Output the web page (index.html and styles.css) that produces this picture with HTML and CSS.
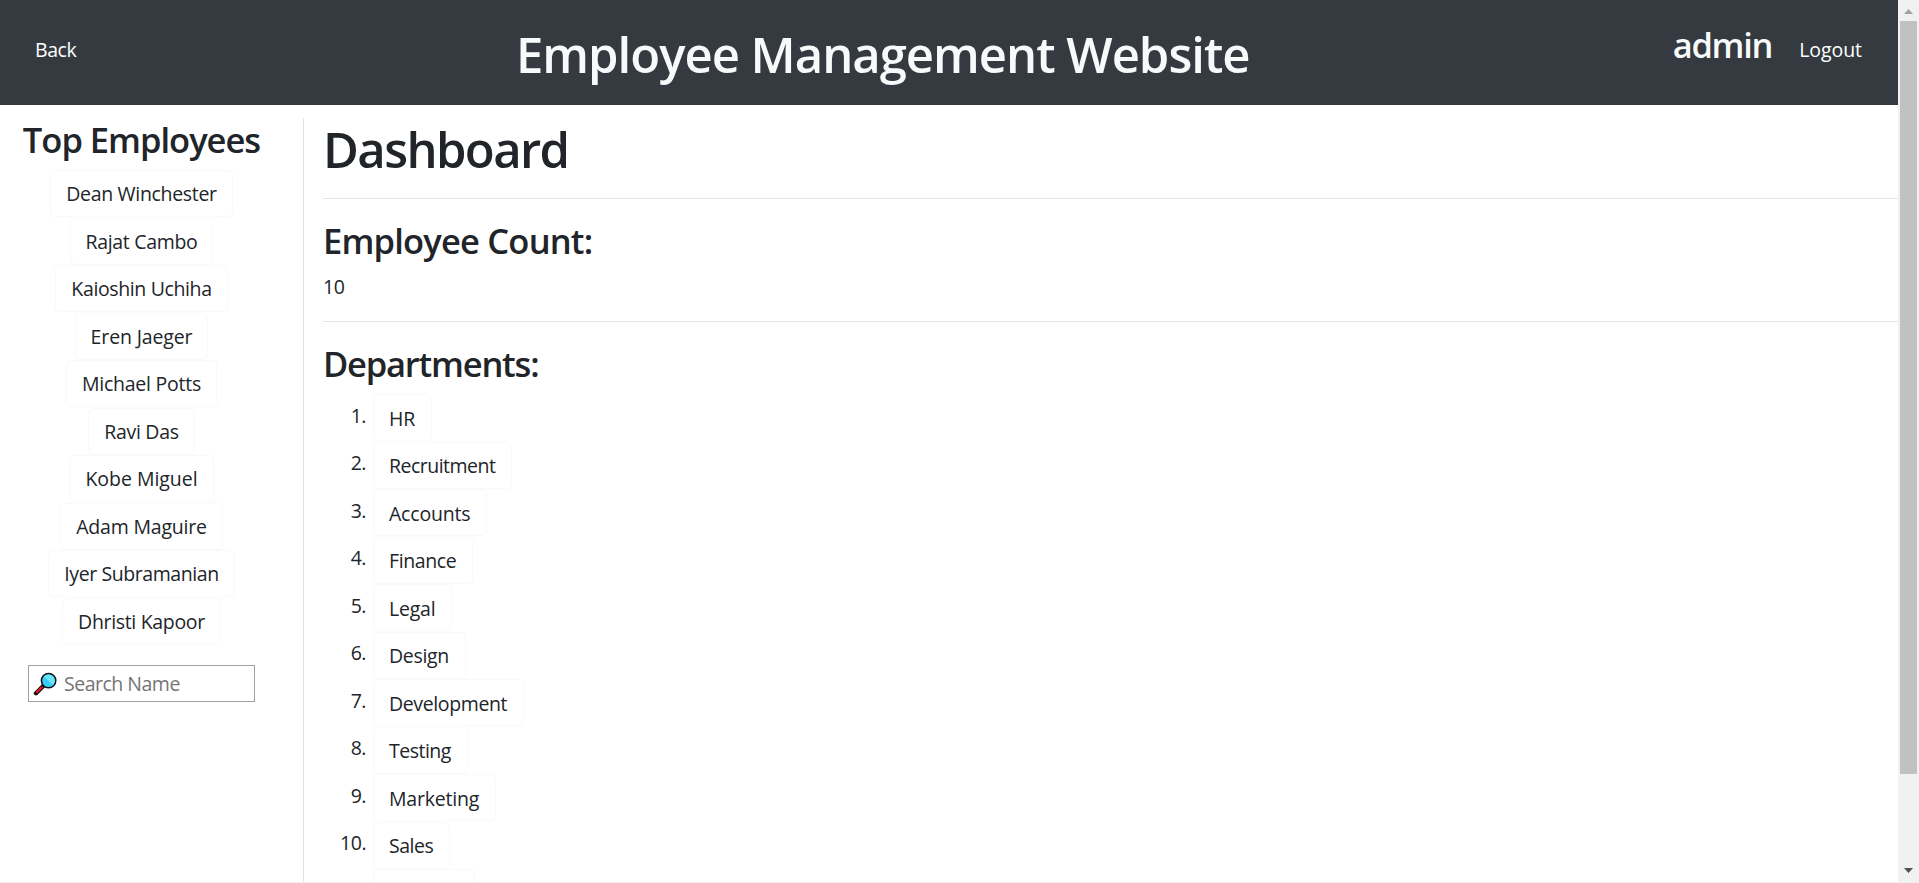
FILE: index.html
```html
<!DOCTYPE html>
<html lang="en">
<head>
<meta charset="utf-8">
<title>Employee Management Website</title>
<link rel="stylesheet" href="styles.css">
</head>
<body>
<div class="page">
  <div class="view">
    <header class="navbar">
      <a class="nav-link back">Back</a>
      <h1 class="brand">Employee Management Website</h1>
      <div class="account"><h3 class="user">admin</h3><a class="nav-link logout">Logout</a></div>
    </header>
    <div class="content">
      <aside class="sidebar">
        <h3 class="side-title">Top Employees</h3>
        <ul class="people">
          <li><a class="btn">Dean Winchester</a></li>
          <li><a class="btn">Rajat Cambo</a></li>
          <li><a class="btn">Kaioshin Uchiha</a></li>
          <li><a class="btn">Eren Jaeger</a></li>
          <li><a class="btn">Michael Potts</a></li>
          <li><a class="btn">Ravi Das</a></li>
          <li><a class="btn">Kobe Miguel</a></li>
          <li><a class="btn">Adam Maguire</a></li>
          <li><a class="btn">Iyer Subramanian</a></li>
          <li><a class="btn">Dhristi Kapoor</a></li>
        </ul>
        <div class="search">
          <svg class="lens" viewBox="0 0 24 24" width="24" height="24"><path d="M3 21.2L11 13.2" stroke="#111" stroke-width="4.4" stroke-linecap="round"/><path d="M3.4 20.6L9.4 14.8" stroke="#e81224" stroke-width="2.2"/><circle cx="15.6" cy="8.6" r="7.2" fill="#35cdf5" stroke="#111" stroke-width="1.5"/><path d="M10.9 4.4A6.3 6.3 0 0 1 20 13.2Z" fill="#6fe3fb"/></svg>
          <span class="placeholder">Search Name</span>
        </div>
      </aside>
      <main class="main">
        <h1 class="title">Dashboard</h1>
        <hr>
        <h3 class="count-title">Employee Count:</h3>
        <p class="count">10</p>
        <hr>
        <h3 class="dept-title">Departments:</h3>
        <ol class="departments">
          <li><i>1.</i><a class="btn">HR</a></li>
          <li><i>2.</i><a class="btn">Recruitment</a></li>
          <li><i>3.</i><a class="btn">Accounts</a></li>
          <li><i>4.</i><a class="btn">Finance</a></li>
          <li><i>5.</i><a class="btn">Legal</a></li>
          <li><i>6.</i><a class="btn">Design</a></li>
          <li><i>7.</i><a class="btn">Development</a></li>
          <li><i>8.</i><a class="btn">Testing</a></li>
          <li><i>9.</i><a class="btn">Marketing</a></li>
          <li><i>10.</i><a class="btn">Sales</a></li>
          <li><i></i><a class="btn btn-cut"></a></li>
        </ol>
      </main>
    </div>
  </div>
  <div class="scrollbar">
    <svg width="9" height="5" viewBox="0 0 9 5"><path d="M0 5L4.5 0L9 5Z" fill="#a3a3a3"/></svg>
    <div class="thumb"></div>
    <svg class="down" width="9" height="5" viewBox="0 0 9 5"><path d="M0 0H9L4.5 5Z" fill="#505050"/></svg>
  </div>
</div>
</body>
</html>
```
FILE: styles.css
```css
* { box-sizing: border-box; }
body {
  margin: 0;
  font: 400 19.5px/30px "Open Sans", "Noto Sans", sans-serif;
  color: #212529;
  background: #fff;
}
.page { display: flex; height: 883px; overflow: hidden; border-bottom: 1px solid #efefef; }
.view { flex: 1; min-width: 0; display: flex; flex-direction: column; overflow: hidden; }
h1, h3, p, ul, ol { margin: 0; padding: 0; }
h1, h3 { font-weight: 600; white-space: nowrap; }
h1 { font-size: 49px; line-height: 60px; padding-top: 1px; }
h3 { font-size: 34.5px; line-height: 42px; padding-top: 1px; margin-bottom: 9px; letter-spacing: -1px; }
ul, ol { list-style: none; }
.navbar {
  flex: 0 0 105px;
  display: flex;
  align-items: flex-start;
  padding: 23px 36px 0 35px;
  background: #343a40;
  color: #f8f9fa;
}
.nav-link { margin-top: 12px; color: #fff; }
.back { flex: 0 0 481px; letter-spacing: -0.45px; }
.logout { letter-spacing: -0.05px; }
.brand { letter-spacing: -1px; }
.user { letter-spacing: -1.3px; }
.account { display: flex; gap: 27px; margin-left: auto; }
.content { flex: 1; display: flex; padding-top: 13px; min-height: 0; }
.sidebar { flex: 0 0 303px; padding: 0 20px 0 0; display: flex; flex-direction: column; align-items: center; }
.people li { height: 47.5px; display: flex; justify-content: center; }
.btn {
  height: 47px;
  padding: 8.5px 15px 0;
  border: 1px solid #f8f9fa;
  border-radius: 5px;
  letter-spacing: -0.32px;
  white-space: nowrap;
}
.people .btn { padding-top: 8px; }
.people li:nth-child(3) .btn { letter-spacing: -0.37px; }
.people li:nth-child(4) .btn { letter-spacing: -0.14px; }
.people li:nth-child(5) .btn { letter-spacing: -0.24px; }
.people li:nth-child(8) .btn { letter-spacing: -0.19px; }
.people li:nth-child(7) .btn { letter-spacing: -0.04px; }
.people li:nth-child(9) .btn { letter-spacing: -0.42px; }
.search {
  margin-top: 20px;
  width: 227px;
  height: 37px;
  display: flex;
  align-items: center;
  padding-left: 4px;
  gap: 7px;
  border: 1px solid #a0a0a0;
  color: #757575;
}
.placeholder { letter-spacing: -0.5px; padding-top: 1px; }
.main { flex: 1; min-width: 0; border-left: 1px solid #dee2e6; padding-left: 19px; }
hr { margin: 20px 0; border: 0; border-top: 1px solid #e5e5e5; }
.title { margin-bottom: -1px; letter-spacing: -1.6px; }
.count-title { letter-spacing: -0.8px; }
.dept-title { letter-spacing: -1.2px; }
.count { padding-top: 1px; margin-bottom: -1px; letter-spacing: -0.4px; }
.departments li { height: 47.5px; display: flex; }
.departments i { font-style: normal; width: 43px; margin: 6.5px 7px 0 0; text-align: right; letter-spacing: -0.5px; }
.departments .btn { padding-right: 16px; }
.departments li:nth-child(1) .btn { letter-spacing: -0.1px; }
.departments li:nth-child(2) .btn { letter-spacing: -0.52px; }
.departments li:nth-child(8) .btn,
.departments li:nth-child(10) .btn { letter-spacing: -0.5px; }
.departments li:nth-child(3) .btn,
.departments li:nth-child(5) .btn,
.departments li:nth-child(9) .btn { letter-spacing: -0.21px; }
.departments li:nth-child(4) .btn,
.departments li:nth-child(7) .btn { letter-spacing: -0.38px; }
.departments .btn-cut { width: 102px; }
.scrollbar {
  flex: 0 0 21px;
  display: flex;
  flex-direction: column;
  align-items: center;
  padding-top: 9px;
  background: #f1f1f1;
}
.thumb { width: 17px; height: 753px; margin-top: 7px; background: #c1c1c1; }
.down { margin-top: 94px; }
```
